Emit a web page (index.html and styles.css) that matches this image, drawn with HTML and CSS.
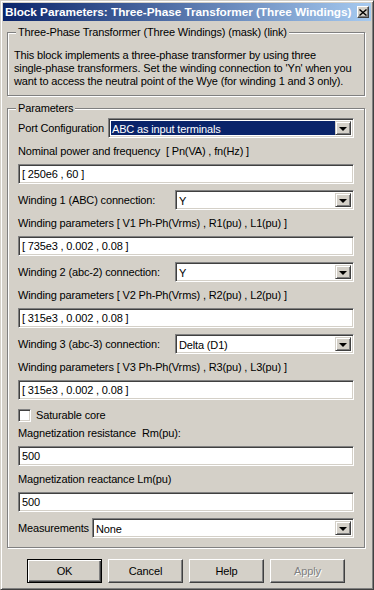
FILE: index.html
```html
<!DOCTYPE html>
<html>
<head>
<meta charset="utf-8">
<link rel="stylesheet" href="styles.css">
</head>
<body>
<div class="window">
  <div class="titlebar">
    <span class="title">Block Parameters: Three-Phase Transformer (Three Windings)</span>
    <span class="close"><svg width="8" height="7" viewBox="0 0 8 7"><path d="M0.5 0.5 L7.5 6.5 M7.5 0.5 L0.5 6.5" stroke="#000" stroke-width="1.4" fill="none"/></svg></span>
  </div>
  <div class="content">
    <div class="frame frame-desc">
      <span class="legend">Three-Phase Transformer (Three Windings) (mask) (link)</span>
      <p class="desc">This block implements a three-phase transformer by using three<br>single-phase transformers. Set the winding connection to 'Yn' when you<br>want to access the neutral point of the Wye (for winding 1 and 3 only).</p>
    </div>
    <div class="frame frame-params">
      <span class="legend">Parameters</span>
      <div class="row">
        <span class="lbl lbl-port">Port Configuration</span>
        <div class="combo"><span class="combo-text selected">ABC as input terminals</span><span class="arrow"></span></div>
      </div>
      <div class="label">Nominal power and frequency&nbsp; [ Pn(VA) , fn(Hz) ]</div>
      <div class="edit">[ 250e6 , 60 ]</div>
      <div class="row">
        <span class="lbl lbl-w">Winding 1 (ABC) connection:</span>
        <div class="combo"><span class="combo-text">Y</span><span class="arrow"></span></div>
      </div>
      <div class="label">Winding parameters [ V1 Ph-Ph(Vrms) , R1(pu) , L1(pu) ]</div>
      <div class="edit">[ 735e3 , 0.002 , 0.08 ]</div>
      <div class="row">
        <span class="lbl lbl-w">Winding 2 (abc-2) connection:</span>
        <div class="combo"><span class="combo-text">Y</span><span class="arrow"></span></div>
      </div>
      <div class="label">Winding parameters [ V2 Ph-Ph(Vrms) , R2(pu) , L2(pu) ]</div>
      <div class="edit">[ 315e3 , 0.002 , 0.08 ]</div>
      <div class="row">
        <span class="lbl lbl-w">Winding 3 (abc-3) connection:</span>
        <div class="combo"><span class="combo-text">Delta (D1)</span><span class="arrow"></span></div>
      </div>
      <div class="label">Winding parameters [ V3 Ph-Ph(Vrms) , R3(pu) , L3(pu) ]</div>
      <div class="edit">[ 315e3 , 0.002 , 0.08 ]</div>
      <div class="check-row">
        <span class="checkbox"></span>
        <span class="check-label">Saturable core</span>
      </div>
      <div class="label">Magnetization resistance&nbsp; Rm(pu):</div>
      <div class="edit">500</div>
      <div class="label">Magnetization reactance Lm(pu)</div>
      <div class="edit">500</div>
      <div class="row">
        <span class="lbl lbl-meas">Measurements</span>
        <div class="combo"><span class="combo-text">None</span><span class="arrow"></span></div>
      </div>
    </div>
    <div class="buttons">
      <div class="btn default"><span>OK</span></div>
      <div class="btn"><span>Cancel</span></div>
      <div class="btn"><span>Help</span></div>
      <div class="btn disabled"><span>Apply</span></div>
    </div>
  </div>
</div>
</body>
</html>
```
FILE: styles.css
```css
* { box-sizing: border-box; }
html, body { margin: 0; padding: 0; }
body {
  width: 374px;
  height: 590px;
  background: #d4d0c8;
  font-family: "Liberation Sans", Arial, sans-serif;
  font-size: 11px;
  letter-spacing: -0.15px;
  color: #000;
  overflow: hidden;
}
.window {
  width: 374px;
  height: 590px;
  border: 1px solid;
  border-color: #d4d0c8 #404040 #404040 #d4d0c8;
  box-shadow: inset 1px 1px 0 #fff, inset -1px -1px 0 #808080;
  padding: 2px;
  display: flex;
  flex-direction: column;
}
.titlebar {
  height: 18px;
  flex: none;
  background: linear-gradient(to right, #0a246a, #a6caf0);
  display: flex;
  align-items: center;
  padding: 0 2px 0 2px;
  color: #fff;
  font-weight: bold;
  font-size: 11.8px;
  letter-spacing: -0.05px;
}
.title { flex: 1; min-width: 0; white-space: nowrap; }
.close {
  width: 12px;
  height: 12px;
  flex: none;
  background: #d4d0c8;
  border: 1px solid;
  border-color: #fff #404040 #404040 #fff;
  box-shadow: inset -1px -1px 0 #808080;
  display: flex;
  align-items: center;
  justify-content: center;
}
.close svg { display: block; }
.content {
  flex: 1;
  padding: 11px 5px 0 4px;
  display: flex;
  flex-direction: column;
}
.frame {
  position: relative;
  border: 1px solid #808080;
  box-shadow: 1px 1px 0 #fff, inset 1px 1px 0 #fff;
  margin-right: 1px;
}
.legend {
  position: absolute;
  top: -7px;
  left: 8px;
  padding: 0 2px;
  line-height: 13px;
  background: #d4d0c8;
  white-space: nowrap;
}
.frame-desc {
  height: 64px;
  padding: 16px 4px 0 6px;
}
.desc {
  margin: 0;
  line-height: 13px;
  white-space: nowrap;
}
.frame-params {
  margin-top: 12px;
  height: 440px;
  padding: 9px 10px 0 10px;
  display: flex;
  flex-direction: column;
  gap: 6px;
}
.row {
  display: flex;
  align-items: center;
  height: 20px;
}
.lbl { flex: none; white-space: nowrap; }
.lbl-port { width: 90px; }
.lbl-w { width: 157px; }
.lbl-meas { width: 74px; }
.label {
  height: 14px;
  line-height: 14px;
  white-space: nowrap;
}
.combo, .edit {
  height: 20px;
  background: #fff;
  border: 1px solid;
  border-color: #808080 #fff #fff #808080;
  box-shadow: inset 1px 1px 0 #404040, inset -1px -1px 0 #d4d0c8;
}
.combo {
  flex: 1;
  display: flex;
  align-items: stretch;
  padding: 2px;
}
.combo-text {
  flex: 1;
  padding-left: 1px;
  line-height: 16px;
  white-space: nowrap;
}
.combo-text.selected {
  background: #0a246a;
  color: #fff;
}
.arrow {
  width: 16px;
  flex: none;
  background: #d4d0c8;
  border: 1px solid;
  border-color: #d4d0c8 #404040 #404040 #d4d0c8;
  box-shadow: inset 1px 1px 0 #fff, inset -1px -1px 0 #808080;
  display: flex;
  align-items: center;
  justify-content: center;
}
.arrow::before {
  content: "";
  width: 0;
  height: 0;
  border-left: 4px solid transparent;
  border-right: 4px solid transparent;
  border-top: 4px solid #000;
  margin-top: 1px;
}
.edit {
  padding: 0 3px;
  line-height: 18px;
  white-space: nowrap;
}
.check-row {
  height: 14px;
  display: flex;
  align-items: center;
  position: relative;
  top: 2px;
}
.checkbox {
  width: 13px;
  height: 13px;
  background: #fff;
  border: 1px solid;
  border-color: #808080 #fff #fff #808080;
  box-shadow: inset 1px 1px 0 #404040, inset -1px -1px 0 #d4d0c8;
  flex: none;
}
.check-label { margin-left: 5px; }
.buttons {
  margin-top: 11px;
  display: flex;
  justify-content: center;
  gap: 6px;
  padding-right: 1px;
}
.btn {
  width: 75px;
  height: 24px;
  background: #d4d0c8;
  border: 1px solid;
  border-color: #fff #404040 #404040 #fff;
  box-shadow: inset -1px -1px 0 #808080;
  display: flex;
  align-items: center;
  justify-content: center;
}
.btn.default {
  border: 1px solid #000;
  box-shadow: inset 1px 1px 0 #fff, inset -1px -1px 0 #404040, inset -2px -2px 0 #808080;
}
.btn.disabled span {
  color: #808080;
  text-shadow: 1px 1px 0 #fff;
}
```
